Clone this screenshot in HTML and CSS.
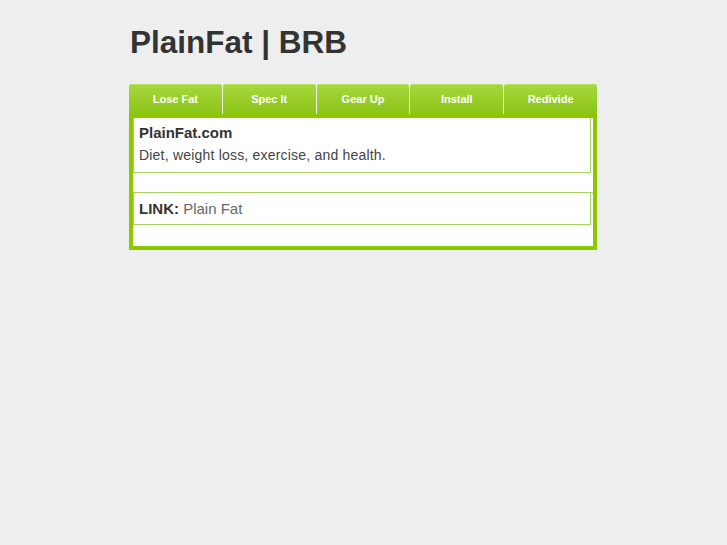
FILE: index.html
```html
<!DOCTYPE html>
<html>
<head>
  <title>PlainFat | BRB</title>
  <link rel="stylesheet" href="styles.css">
</head>
<body>
  <div class="page">
    <h1 class="site-title">PlainFat | BRB</h1>

    <div class="tabs">
      <a href="#" class="tab">Lose Fat</a>
      <a href="#" class="tab">Spec It</a>
      <a href="#" class="tab">Gear Up</a>
      <a href="#" class="tab">Install</a>
      <a href="#" class="tab">Redivide</a>
    </div>

    <div class="frame">
      <div class="content">
        <div class="entry">
          <div class="entry-title">PlainFat.com</div>
          <div class="entry-text">Diet, weight loss, exercise, and health.</div>
        </div>
        <div class="spacer"></div>
        <div class="entry entry-link">
          <span class="link-label">LINK:</span> <a href="#" class="link-name">Plain Fat</a>
        </div>
        <div class="spacer last"></div>
      </div>
    </div>
  </div>
</body>
</html>
```

FILE: styles.css
```css
body {
  margin: 0;
  background-color: #eeeeee;
  font-family: "Liberation Sans", Arial, sans-serif;
  color: #333333;
}

.page {
  width: 468px;
  margin-left: 129px;
  padding-top: 20px;
}

.site-title {
  margin: 0 0 0 1px;
  font-size: 31.5px;
  line-height: 44px;
  color: #333333;
}

.tabs {
  display: flex;
  gap: 1px;
  margin-top: 20px;
}

.tab {
  flex: 1;
  height: 30px;
  line-height: 30px;
  text-align: center;
  font-size: 11px;
  font-weight: bold;
  color: #ffffff;
  text-decoration: none;
  background: linear-gradient(#a6d83e, #8cc417);
  border-radius: 3px 3px 0 0;
  box-shadow: inset 0 1px 0 #b4e05a;
}

.frame {
  background-color: #8cc800;
  padding: 4px;
}

.content {
  background-color: #ffffff;
}

.entry {
  border: 1px solid #a8d462;
  border-top: none;
  margin-right: 2px;
  padding: 5px;
}

.entry:first-child {
  height: 44px;
  padding-top: 5px;
}

.entry-title {
  font-size: 15px;
  font-weight: bold;
  line-height: 20px;
  color: #333333;
}

.entry-text {
  font-size: 14px;
  line-height: 24px;
  letter-spacing: 0.2px;
  color: #444444;
}

.spacer {
  height: 19px;
  border-bottom: 1px solid #a8d462;
}

.spacer.last {
  height: 21px;
  border-bottom: none;
}

.entry-link {
  height: 21px;
  line-height: 21px;
  font-size: 15px;
}

.link-label {
  font-weight: bold;
  color: #333333;
}

.link-name {
  color: #666666;
  text-decoration: none;
}
```
